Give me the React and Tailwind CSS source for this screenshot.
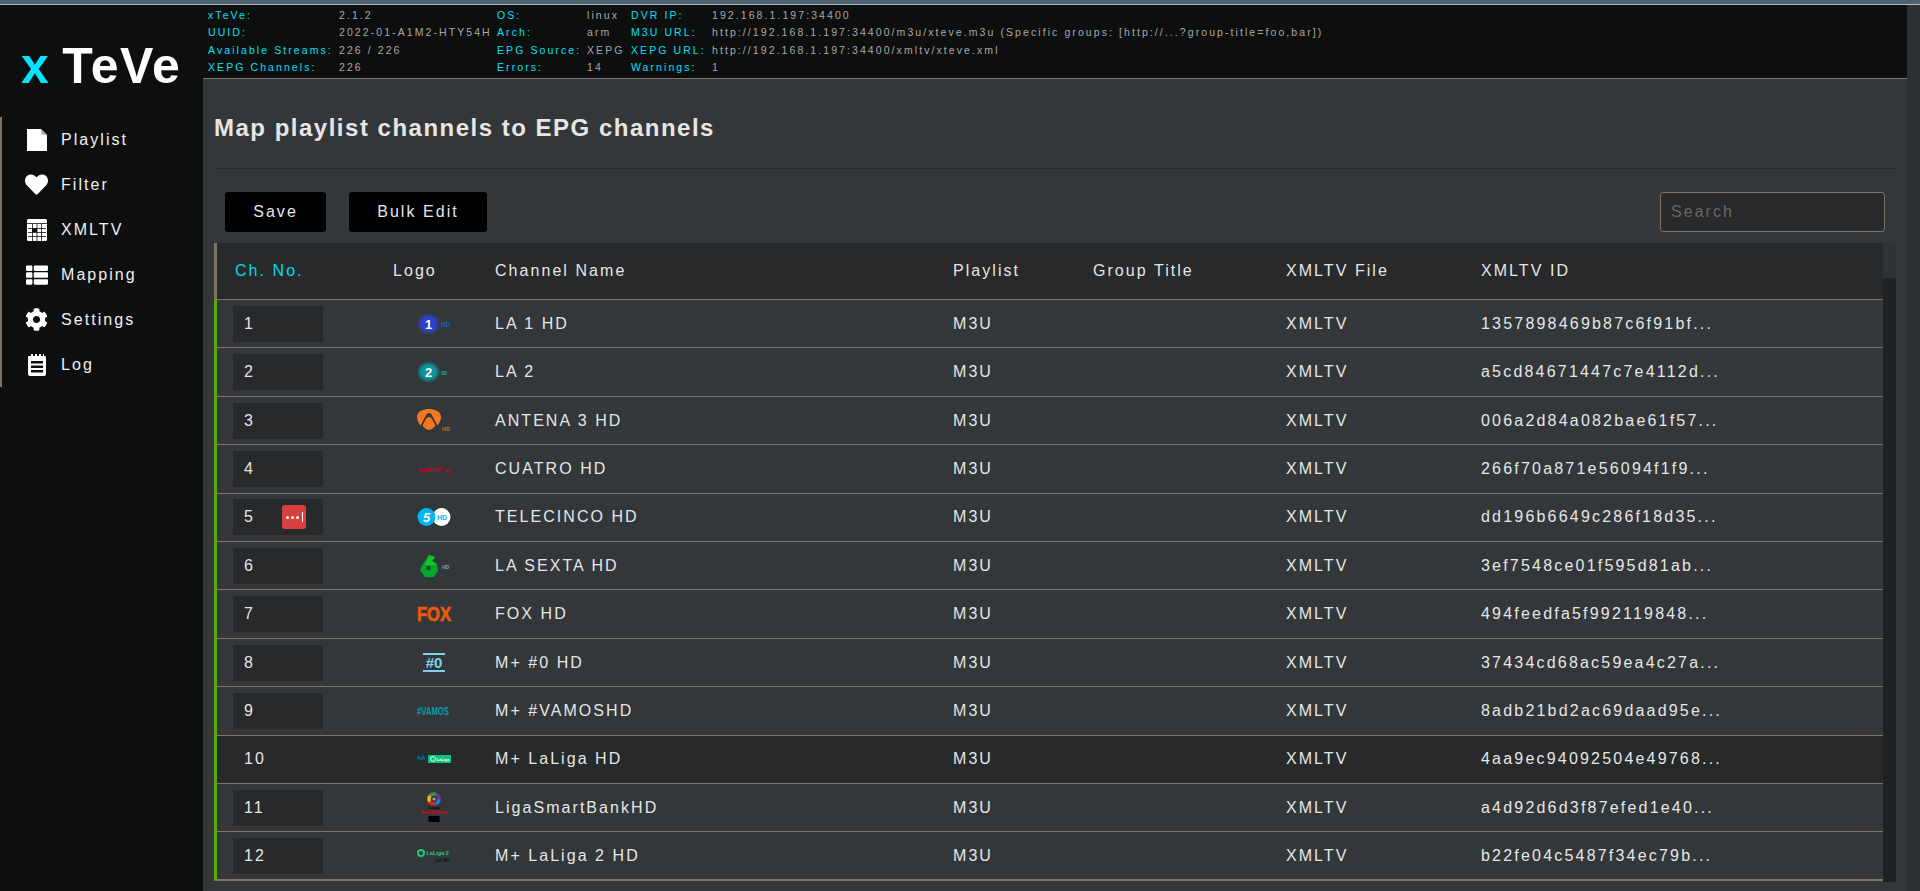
import React from "react";
import { FaHeart, FaThList, FaCog } from "react-icons/fa";

const infoRows = [
  ["xTeVe:", "2.1.2", "OS:", "linux", "DVR IP:", "192.168.1.197:34400"],
  ["UUID:", "2022-01-A1M2-HTY54H", "Arch:", "arm", "M3U URL:", "http://192.168.1.197:34400/m3u/xteve.m3u (Specific groups: [http://...?group-title=foo,bar])"],
  ["Available Streams:", "226 / 226", "EPG Source:", "XEPG", "XEPG URL:", "http://192.168.1.197:34400/xmltv/xteve.xml"],
  ["XEPG Channels:", "226", "Errors:", "14", "Warnings:", "1"],
];

function FileIcon() {
  return (
    <svg width="20" height="22" viewBox="0 0 20 22">
      <path d="M0 0h14l6 6v16H0z" fill="#fff" />
      <path d="M14.5 0.5 19.5 5.5h-5z" fill="#aaa" />
    </svg>
  );
}

function CalendarIcon() {
  return (
    <svg width="20" height="22" viewBox="0 0 20 22">
      <rect width="20" height="22" rx="1.5" fill="#fff" />
      <path d="M0 4.5h20M1 9.5h18M1 13.5h18M1 17.5h18M5.5 5v17M10 5v17M14.5 5v17" stroke="#0d0f0f" strokeWidth="0.8" />
      <rect x="5" y="9" width="5" height="4" fill="#0d0f0f" />
    </svg>
  );
}

function NotesIcon() {
  return (
    <svg width="18" height="22" viewBox="0 0 18 22">
      <path d="M3 0h2v2h2V0h2v2h2V0h2v2h2V0h1v2h1a1 1 0 0 1 1 1v17a2 2 0 0 1-2 2H2a2 2 0 0 1-2-2V3a1 1 0 0 1 1-1h2z" fill="#fff" />
      <path d="M3 7h12v2.5H3zM3 11.5h12V14H3zM3 16h12v2.5H3z" fill="#0d0f0f" />
    </svg>
  );
}

const navItems = [
  ["Playlist", <FileIcon />],
  ["Filter", <FaHeart size={23} className="text-white" />],
  ["XMLTV", <CalendarIcon />],
  ["Mapping", <FaThList size={22} className="text-white" />],
  ["Settings", <FaCog size={23} className="text-white" />],
  ["Log", <NotesIcon />],
];

function LogoCircle({ bg, num, tag, tagColor, tagSize }) {
  return (
    <svg width="34" height="24" viewBox="0 0 34 24">
      <defs>
        <radialGradient id={"glow" + num}>
          <stop offset="60%" stopColor={bg} />
          <stop offset="100%" stopColor={bg} stopOpacity="0" />
        </radialGradient>
      </defs>
      <ellipse cx="11.5" cy="12" rx="12" ry="11" fill={"url(#glow" + num + ")"} />
      <text x="11.5" y="16.5" textAnchor="middle" fontSize="13" fontWeight="700" fill="#fff" fontFamily="Liberation Sans">{num}</text>
      <text x="24" y="14.5" fontSize={tagSize} fontWeight="700" fill={tagColor} fontFamily="Liberation Sans">{tag}</text>
    </svg>
  );
}

function AntenaLogo() {
  return (
    <svg width="34" height="24" viewBox="0 0 34 24">
      <path d="M12 0C17 0 24 2 24 8c0 3-2 7-3.5 8.5L14.5 5.5c-1-2-4-2-5 0L3.5 16.5C2 15 0 11 0 8 0 2 7 0 12 0z" fill="#f5781e" />
      <path d="M12 8c1.5 0 2.5 1 3 2l3.5 6.5c-1.5 2-4 4.5-6.5 4.5s-5-2.5-6.5-4.5L9 10c.5-1 1.5-2 3-2z" fill="#f5781e" />
      <text x="25" y="22" fontSize="5.5" fontWeight="700" fill="#d8681c" fontFamily="Liberation Sans">HD</text>
    </svg>
  );
}

function CuatroLogo() {
  return (
    <svg width="34" height="14" viewBox="0 0 34 14">
      <text x="0" y="10" fontSize="7.5" fill="#d4001a" fontFamily="Liberation Sans" textLength="22" lengthAdjust="spacingAndGlyphs">cuatro</text>
      <circle cx="24" cy="6.5" r="1.7" fill="#d4001a" />
      <text x="27" y="11" fontSize="5.5" fontWeight="700" fill="#d4001a" fontFamily="Liberation Sans">HD</text>
    </svg>
  );
}

function TelecincoLogo() {
  return (
    <svg width="34" height="20" viewBox="0 0 34 20">
      <circle cx="24.5" cy="10" r="9" fill="#fff" />
      <circle cx="9.5" cy="10" r="9" fill="#00b5f1" />
      <text x="9.5" y="14.5" textAnchor="middle" fontSize="13" fontWeight="700" fontStyle="italic" fill="#fff" fontFamily="Liberation Sans">5</text>
      <text x="20" y="12.5" fontSize="7" fontWeight="700" fill="#00b5f1" fontFamily="Liberation Sans">HD</text>
    </svg>
  );
}

function SextaLogo() {
  return (
    <svg width="34" height="24" viewBox="0 0 34 24">
      <path d="M12 1l6 2-3 4 5 3 1 7-4 6H8l-5-7 3-6z" fill="#00a82d" />
      <path d="M12 1l6 2-3 4 5 3-4 1H8z" fill="#12c71e" />
      <circle cx="11.5" cy="14" r="2.2" fill="#33373a" />
      <text x="25" y="14.5" fontSize="5" fontWeight="700" fill="#999" fontFamily="Liberation Sans">HD</text>
    </svg>
  );
}

function FoxLogo() {
  return (
    <svg width="34" height="16" viewBox="0 0 34 16" className="overflow-visible">
      <text x="0" y="15" fontSize="20.5" fontWeight="700" fill="#ea5b0c" stroke="#ea5b0c" strokeWidth="0.7" fontFamily="Liberation Sans" textLength="34" lengthAdjust="spacingAndGlyphs">FOX</text>
    </svg>
  );
}

function ZeroLogo() {
  return (
    <div className="w-[22px] border-y-[2px] border-[#7fd0e8] text-center font-bold text-[15px] leading-[15px] text-[#7fd0e8]">#0</div>
  );
}

function VamosLogo() {
  return (
    <svg width="34" height="12" viewBox="0 0 34 12" className="overflow-visible">
      <text x="0" y="10" fontSize="10" fontWeight="700" fill="#0d9aa8" fontFamily="Liberation Sans" textLength="32" lengthAdjust="spacingAndGlyphs">#VAMOS</text>
    </svg>
  );
}

function LaLigaLogo() {
  return (
    <svg width="34" height="14" viewBox="0 0 34 14">
      <path d="M0 5l2-2 2 3 2-3 2 2v3L6 7 4 9 2 7 0 8z" fill="#0a5f84" />
      <rect x="11" y="3" width="23" height="8" fill="#08c47d" />
      <circle cx="16" cy="7" r="2.4" fill="none" stroke="#fff" strokeWidth="0.9" />
      <text x="19.5" y="8.5" fontSize="4" fontWeight="700" fill="#fff" fontFamily="Liberation Sans">LaLiga</text>
    </svg>
  );
}

function SmartBankLogo() {
  return (
    <svg width="34" height="32" viewBox="0 0 34 32">
      <circle cx="17" cy="7" r="5" fill="none" stroke="#2a77c9" strokeWidth="3.5" strokeDasharray="6.3 25.2" />
      <circle cx="17" cy="7" r="5" fill="none" stroke="#d5232e" strokeWidth="3.5" strokeDasharray="6.3 25.2" strokeDashoffset="-6.3" />
      <circle cx="17" cy="7" r="5" fill="none" stroke="#f2b01e" strokeWidth="3.5" strokeDasharray="6.3 25.2" strokeDashoffset="-12.6" />
      <circle cx="17" cy="7" r="5" fill="none" stroke="#2e9e4b" strokeWidth="3.5" strokeDasharray="6.3 25.2" strokeDashoffset="-18.9" />
      <circle cx="17" cy="7" r="5" fill="none" stroke="#7b2d9c" strokeWidth="3.5" strokeDasharray="6.3 25.2" strokeDashoffset="-25.2" />
      <circle cx="17" cy="7" r="1.5" fill="#aaa" />
      <text x="17" y="17" textAnchor="middle" fontSize="3.5" fontWeight="700" fill="#000" fontFamily="Liberation Sans">LaLiga</text>
      <text x="17" y="22" textAnchor="middle" fontSize="5" fontWeight="700" fill="#c4121f" fontFamily="Liberation Sans">SmartBank</text>
      <rect x="11.5" y="24" width="11" height="6" fill="#000" />
    </svg>
  );
}

function LaLiga2Logo() {
  return (
    <svg width="34" height="18" viewBox="0 0 34 18">
      <circle cx="4" cy="6" r="3" fill="none" stroke="#1ec77c" strokeWidth="2" />
      <text x="9.5" y="8" fontSize="5.5" fontWeight="700" fill="#1ec77c" fontFamily="Liberation Sans">LaLiga 2</text>
      <text x="18" y="15" fontSize="4.5" fontWeight="700" fill="#111" fontFamily="Liberation Sans">por M+</text>
    </svg>
  );
}

const channels = [
  [1, <LogoCircle bg="#2c41cc" num="1" tag="HD" tagColor="#1e62b8" tagSize="6.5" />, "LA 1 HD", "1357898469b87c6f91bf..."],
  [2, <LogoCircle bg="#0a959c" num="2" tag="SD" tagColor="#1fa8a8" tagSize="4.5" />, "LA 2", "a5cd84671447c7e4112d..."],
  [3, <AntenaLogo />, "ANTENA 3 HD", "006a2d84a082bae61f57..."],
  [4, <CuatroLogo />, "CUATRO HD", "266f70a871e56094f1f9..."],
  [5, <TelecincoLogo />, "TELECINCO HD", "dd196b6649c286f18d35..."],
  [6, <SextaLogo />, "LA SEXTA HD", "3ef7548ce01f595d81ab..."],
  [7, <FoxLogo />, "FOX HD", "494feedfa5f992119848..."],
  [8, <ZeroLogo />, "M+ #0 HD", "37434cd68ac59ea4c27a..."],
  [9, <VamosLogo />, "M+ #VAMOSHD", "8adb21bd2ac69daad95e..."],
  [10, <LaLigaLogo />, "M+ LaLiga HD", "4aa9ec94092504e49768..."],
  [11, <SmartBankLogo />, "LigaSmartBankHD", "a4d92d6d3f87efed1e40..."],
  [12, <LaLiga2Logo />, "M+ LaLiga 2 HD", "b22fe04c5487f34ec79b..."],
];

function Row({ channel }) {
  const [no, logo, name, id] = channel;
  const active = no === 10;
  return (
    <div className={"grid grid-cols-[160px_102px_458px_140px_193px_195px_1fr] items-center h-[48.42px] border-b last:border-b-2 border-[#7d7465] border-l-[3px] border-l-[#5aa90a] pl-4 " + (active ? "bg-[#27292a]" : "")}>
      <div className={"relative w-[90px] h-9 flex items-center pl-[11px] " + (active ? "" : "bg-[#27292a]")}>
        {no}
        {no === 5 && (
          <div className="absolute left-[49px] top-[6px] w-6 h-6 rounded-[3px] bg-[#d93f3f] flex items-center justify-center gap-[2px]">
            <span className="w-[3px] h-[3px] rounded-full bg-white" />
            <span className="w-[3px] h-[3px] rounded-full bg-white" />
            <span className="w-[3px] h-[3px] rounded-full bg-white" />
            <span className="w-px h-[10px] bg-white ml-[1px]" />
          </div>
        )}
      </div>
      <div className="flex justify-center w-[34px] ml-6 tracking-normal">{logo}</div>
      <div>{name}</div>
      <div>M3U</div>
      <div />
      <div>XMLTV</div>
      <div className="tracking-[2.2px]">{id}</div>
    </div>
  );
}

export default function App() {
  return (
    <div className="h-[891px] overflow-hidden flex flex-col bg-[#33373a] text-[#e6e6e6] font-['Liberation_Sans',sans-serif]">
      <div className="h-[5px] shrink-0 bg-[#4f6272] border-b border-[#a9b6bf]" />
      <div className="flex flex-1 min-h-0">
        <aside className="w-[203px] shrink-0 bg-[#0d0f0f]">
          <div className="h-[112px] flex items-center pl-[21px] pt-[9px] text-[50px] font-bold leading-none tracking-[1.5px] text-white">
            <span className="text-[#00e5ff] mr-3">x</span>TeVe
          </div>
          <nav className="border-l-2 border-[#7d7465] h-[270px] flex flex-col justify-around">
            {navItems.map(([label, icon]) => (
              <div key={label} className="flex items-center h-[45px]">
                <div className="w-[59px] pl-[23px] pr-[13px] flex justify-center">{icon}</div>
                <span className="text-[16px] tracking-[2.05px] text-[#f0f0f0]">{label}</span>
              </div>
            ))}
          </nav>
        </aside>
        <div className="flex-1 min-w-0 flex flex-col">
          <header className="h-[74px] shrink-0 bg-[#0d0f0f] border-b border-[#7d7465] pt-[2px] text-[10.5px] tracking-[2.08px] leading-[17.3px]">
            {infoRows.map((r) => (
              <div key={r[0]} className="grid grid-cols-[131px_158px_90px_44px_1fr] pl-[5px] whitespace-nowrap">
                <span className="text-[#00e0f5]">{r[0]}</span>
                <span className="text-[#a8a8a8]">{r[1]}</span>
                <span className="text-[#00e0f5]">{r[2]}</span>
                <span className="text-[#a8a8a8]">{r[3]}</span>
                <span className="flex">
                  <span className="w-[81px] text-[#00e0f5]">{r[4]}</span>
                  <span className="text-[#a8a8a8]">{r[5]}</span>
                </span>
              </div>
            ))}
          </header>
          <main className="flex-1 min-h-0 px-[11px]">
            <h1 className="h-[90px] flex items-center pt-[9px] text-[24px] font-bold tracking-[1.5px] text-[#e8e6e3] border-b border-[#27292a]">
              Map playlist channels to EPG channels
            </h1>
            <div className="flex items-center justify-between h-10 mt-[23px] mb-[11px] px-[11px]">
              <div className="flex gap-[23px]">
                <button className="w-[101px] h-10 bg-black rounded-[3px] text-[16px] tracking-[2.05px]">Save</button>
                <button className="w-[138px] h-10 bg-black rounded-[3px] text-[16px] tracking-[2.05px]">Bulk Edit</button>
              </div>
              <input
                placeholder="Search"
                className="w-[225px] h-10 px-[10px] bg-[#27292a] border border-[#7d7465] rounded-[3px] text-[16px] tracking-[2.05px] placeholder:text-[#666]"
              />
            </div>
            <div className="flex h-[639px] tracking-[2.05px] text-[16px]">
              <div className="flex-1 min-w-0">
                <div className="grid grid-cols-[158px_102px_458px_140px_193px_195px_1fr] items-center h-[57px] bg-[#27292a] border-b border-[#7d7465] border-l-[3px] pl-[18px]">
                  <div className="text-[#00dcec]">Ch. No.</div>
                  <div>Logo</div>
                  <div>Channel Name</div>
                  <div>Playlist</div>
                  <div>Group Title</div>
                  <div>XMLTV File</div>
                  <div>XMLTV ID</div>
                </div>
                {channels.map((c) => (
                  <Row key={c[0]} channel={c} />
                ))}
              </div>
              <div className="w-[13px] bg-[#1f2122]">
                <div className="h-[35px] bg-[#303335]" />
              </div>
            </div>
          </main>
        </div>
        <div className="w-[13px] shrink-0 bg-[#2d3033]" />
      </div>
    </div>
  );
}
